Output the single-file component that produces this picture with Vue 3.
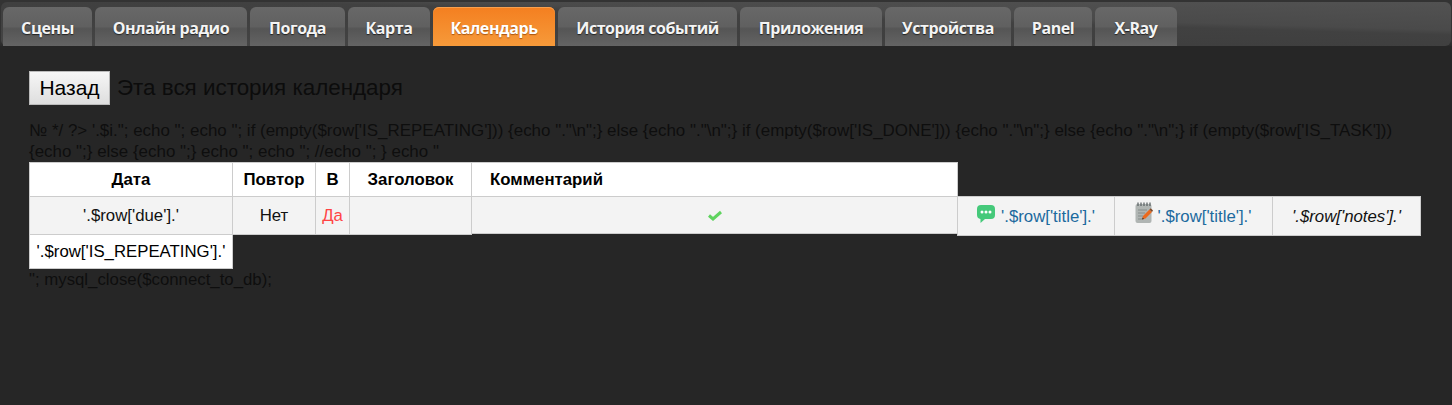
<script setup>
const tabs = [
  { label: 'Сцены', width: 89 },
  { label: 'Онлайн радио', width: 152 },
  { label: 'Погода', width: 95 },
  { label: 'Карта', width: 82 },
  { label: 'Календарь', width: 122, active: true },
  { label: 'История событий', width: 179 },
  { label: 'Приложения', width: 142 },
  { label: 'Устройства', width: 126 },
  { label: 'Panel', width: 78 },
  { label: 'X-Ray', width: 82 },
]
const code = `№ */ ?> '.$i."; echo "; echo "; if (empty($row['IS_REPEATING'])) {echo ".\"\\n";} else {echo ".\"\\n";} if (empty($row['IS_DONE'])) {echo ".\"\\n";} else {echo ".\"\\n";} if (empty($row['IS_TASK'])) {echo ";} else {echo ";} echo "; echo "; //echo "; } echo "`
</script>

<template>
  <div class="page">
    <div class="bar-wrap">
      <nav class="bar">
        <a
          v-for="t in tabs"
          :key="t.label"
          class="tab"
          :class="{ active: t.active }"
          :style="{ width: t.width + 'px' }"
        >{{ t.label }}</a>
      </nav>
    </div>
    <main class="content">
      <div class="head">
        <button class="back">Назад</button>
        <span class="title">Эта вся история календаря</span>
      </div>
      <p class="code">{{ code }}</p>
      <div class="table">
        <div class="row header">
          <div class="cell c-date">Дата</div>
          <div class="cell c-rep">Повтор</div>
          <div class="cell c-b">В</div>
          <div class="cell c-title">Заголовок</div>
          <div class="cell c-note">Комментарий</div>
        </div>
        <div class="row body">
          <div class="cell c-date">'.$row['due'].'</div>
          <div class="cell c-rep">Нет</div>
          <div class="cell c-b red">Да</div>
          <div class="cell c-title"></div>
          <div class="cell c-note check">
            <svg width="14" height="11" viewBox="0 0 14 11"><path d="M1 5.5 L5 9 L13 2" fill="none" stroke="#5fd35f" stroke-width="3"/></svg>
          </div>
          <div class="cell extra e1">
            <svg class="ico chat" width="18" height="18" viewBox="0 0 18 18">
              <path d="M4 0h10a4 4 0 0 1 4 4v6a4 4 0 0 1-4 4H8l-4.5 4v-4A4 4 0 0 1 0 10V4a4 4 0 0 1 4-4z" fill="#45c97a"/>
              <circle cx="5" cy="7" r="1.5" fill="#fff"/><circle cx="9" cy="7" r="1.5" fill="#fff"/><circle cx="13" cy="7" r="1.5" fill="#fff"/>
            </svg>
            <span class="link">'.$row['title'].'</span>
          </div>
          <div class="cell extra e2">
            <svg class="ico pad" width="18" height="21" viewBox="0 0 18 21">
              <rect x="0.5" y="2" width="16" height="19" rx="2" fill="#b0b5b3"/>
              <path d="M3 0.5v3.5M6 0.5v3.5M9 0.5v3.5M12 0.5v3.5M15 0.5v3.5" stroke="#5f6668" stroke-width="1.3"/>
              <path d="M3 8h9M3 11h7M3 14h5M3 17h4" stroke="#868d8c" stroke-width="1.1"/>
              <path d="M7 17.5l1-3.5 6.5-6.5 2.5 2.5-6.5 6.5z" fill="#ea6a1f"/>
              <path d="M14.5 7.5l1.2-1.2 2.3 2.3-1 1.4z" fill="#7d4a2a"/>
              <path d="M7 17.5l0.6-2 1.5 1.4z" fill="#3a3a3a"/>
            </svg>
            <span class="link">'.$row['title'].'</span>
          </div>
          <div class="cell extra e3"><em>'.$row['notes'].'</em></div>
        </div>
        <div class="row last">
          <div class="cell c-date">'.$row['IS_REPEATING'].'</div>
        </div>
      </div>
      <p class="tail">"; mysql_close($connect_to_db);</p>
    </main>
  </div>
</template>

<style>
html, body { margin: 0; background: #262626; }
</style>

<style scoped>
.page {
  width: 1452px;
  height: 405px;
  overflow: hidden;
  background: #262626;
  font-family: "Liberation Sans", Arial, sans-serif;
}
.bar-wrap {
  height: 46px;
  box-sizing: border-box;
  padding: 2px 1px 0;
  background: linear-gradient(#333 0, #333 40px, #2a2a2a 100%);
}
.bar {
  display: flex;
  gap: 3px;
  height: 44px;
  box-sizing: border-box;
  padding: 5px 0 0 2px;
  border-radius: 6px;
  background: linear-gradient(181.6deg, #525252 0, #4a4a4a 28px, #414141 33px, #3f3f3f 50px, #454545 84px);
}
.tab {
  height: 39px;
  flex: none;
  box-sizing: border-box;
  padding-top: 12px;
  text-align: center;
  border-radius: 6px 6px 0 0;
  background: linear-gradient(#686868 0%, #606060 50%, #555 56%, #646464 100%);
  color: #f4f4f4;
  font: 700 16px/18px "Open Sans", sans-serif;
  letter-spacing: -0.42px;
  text-shadow: 0 1px 1px #222;
  white-space: nowrap;
}
.tab.active {
  background: linear-gradient(#f47f20, #f69a3a);
  color: #fff;
  box-shadow: inset 0 1px 0 #f9a04e;
  text-shadow: 0 1px 1px #a85510;
}
.content { padding: 25px 0 0 29px; }
.head { display: flex; align-items: center; height: 34px; }
.back {
  width: 81px;
  height: 34px;
  padding: 0;
  border: 1px solid #bbb;
  background: linear-gradient(#f6f6f6, #dedede);
  color: #000;
  font: 21px "Liberation Sans", sans-serif;
}
.title { margin-left: 7px; font-size: 22.4px; color: #0c0c0c; }
.code {
  margin: 15px 0 0;
  width: 1395px;
  font-size: 16.95px;
  line-height: 21px;
  color: #0e0e0e;
}
.table { font-size: 16.8px; color: #111; }
.row { display: flex; align-items: flex-start; }
.cell {
  box-sizing: border-box;
  border: 1px solid #ccc;
  margin-right: -1px;
  text-align: center;
  background: #f3f3f3;
  flex: none;
}
.header .cell { height: 35px; line-height: 33px; background: #fff; font-weight: 700; color: #000; }
.body { margin-top: -1px; }
.body .cell { height: 39px; line-height: 37px; }
.c-date { width: 204px; }
.c-rep { width: 84px; }
.c-b { width: 35px; }
.c-title { width: 123px; }
.c-note { width: 487px; }
.header .c-note { text-align: left; padding-left: 18px; }
.body .c-note { height: 38px; }
.red { color: #f44; }
.check { display: flex; align-items: center; justify-content: center; }
.body .extra { height: 40px; line-height: 39px; }
.e1 { width: 158px; }
.e2 { width: 159px; }
.e3 { width: 149px; }
.ico { vertical-align: -1px; }
.chat { margin-right: 6px; }
.pad { margin: 0 5px 0 -1px; }
.link { color: #1c6a9e; }
.last { margin-top: -2px; }
.last .cell { height: 35px; line-height: 34px; background: #fff; color: #000; }
.tail { margin: 0; font-size: 16.8px; line-height: 21px; color: #0e0e0e; }
</style>
